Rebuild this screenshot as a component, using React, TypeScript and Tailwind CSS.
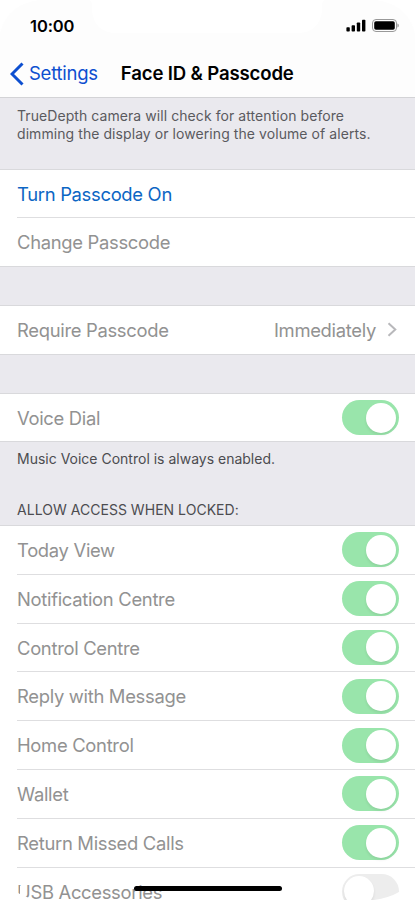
import type { ReactNode } from "react";

const ACCESS_ITEMS = [
  { label: "Today View", on: true },
  { label: "Notification Centre", on: true },
  { label: "Control Centre", on: true },
  { label: "Reply with Message", on: true },
  { label: "Home Control", on: true },
  { label: "Wallet", on: true },
  { label: "Return Missed Calls", on: true },
  { label: "USB Accessories", on: false },
];

function Toggle({ on }: { on: boolean }) {
  return (
    <span
      className={`flex h-[35px] w-[57px] shrink-0 items-center rounded-full ${
        on ? "justify-end bg-[#99e5ab] pr-[3px]" : "justify-start bg-[#ededed] pl-[2px]"
      }`}
    >
      <span className="size-[30px] rounded-full bg-white shadow-[0_2px_3px_rgba(0,0,0,0.08)]" />
    </span>
  );
}

function Group({ children }: { children: ReactNode }) {
  return <section className="border-y border-[#d9d9dc] bg-white pl-[17px]">{children}</section>;
}

type RowProps = {
  label: string;
  height?: string;
  divider?: boolean;
  active?: boolean;
  children?: ReactNode;
};

function Row({ label, height = "h-[48px]", divider, active, children }: RowProps) {
  return (
    <div
      className={`flex items-center justify-between pr-4 text-[18.4px] tracking-[-0.3px] ${height} ${
        divider ? "border-b border-[#dedee0]" : ""
      } ${active ? "text-[#0c66c4]" : "text-[#929292]"}`}
    >
      <span className="pt-[2px]">{label}</span>
      {children}
    </div>
  );
}

function StatusBar() {
  return (
    <div className="flex h-[50px] items-center justify-between pr-[16px] pl-[30px]">
      <span className="pt-[2px] text-[16.5px] font-semibold tracking-[-0.1px]">10:00</span>
      <div className="flex items-center gap-[6px]">
        <svg width="20" height="13" viewBox="0 0 20 13">
          <rect x="0.4" y="8.2" width="3.4" height="4.3" rx="0.8" />
          <rect x="5.6" y="6.2" width="3.4" height="6.3" rx="0.8" />
          <rect x="10.8" y="3.5" width="3.4" height="9" rx="0.8" />
          <rect x="16" y="0.7" width="3.4" height="11.8" rx="0.8" />
        </svg>
        <svg width="27" height="13" viewBox="0 0 27 13">
          <rect x="0.5" y="0.5" width="24" height="12" rx="3.5" fill="none" stroke="#999" />
          <rect x="2.2" y="2.2" width="20.6" height="8.6" rx="1.8" />
          <path d="M25.5 4.5c1.6.6 1.6 3.4 0 4z" fill="#888" />
        </svg>
      </div>
    </div>
  );
}

export default function App() {
  return (
    <div className="relative h-[900px] w-[415px] overflow-hidden bg-[#eae9ee] font-[Inter,'Liberation_Sans',sans-serif] text-black">
      <header className="h-[98px] border-b border-[#d3d3d6] bg-[#fdfdfd]">
        <StatusBar />
        <div className="flex h-[47px] items-center pl-[10px]">
          <svg width="14" height="24" viewBox="0 0 14 24" fill="none" stroke="#0d4fd0" strokeWidth="3">
            <path d="M12.5 1.5 2 12l10.5 10.5" />
          </svg>
          <span className="ml-[5px] text-[18.5px] tracking-[-0.25px] text-[#0d4fd0]">Settings</span>
          <h1 className="ml-[23px] text-[18.6px] font-semibold tracking-[-0.16px]">Face ID &amp; Passcode</h1>
        </div>
      </header>

      <p className="h-[71px] pt-[9px] pl-[17px] text-[14px] leading-[18px] tracking-[0.07px] text-[#5a5a5e]">
        TrueDepth camera will check for attention before
        <br />
        dimming the display or lowering the volume of alerts.
      </p>

      <Group>
        <Row label="Turn Passcode On" divider active />
        <Row label="Change Passcode" />
      </Group>

      <div className="h-[38px]" />
      <Group>
        <Row label="Require Passcode">
          <span className="flex items-center gap-[11px] pr-px">
            <span className="pt-[2px]">Immediately</span>
            <svg width="11" height="15" viewBox="0 0 11 15" fill="none" stroke="#b8b8bb" strokeWidth="2">
              <path d="m1.5 1.2 6.8 6.3-6.8 6.3" />
            </svg>
          </span>
        </Row>
      </Group>

      <div className="h-[38px]" />
      <Group>
        <Row label="Voice Dial" height="h-[47px]">
          <Toggle on />
        </Row>
      </Group>

      <p className="h-[50px] pt-[8px] pl-[17px] text-[14px] leading-[18px] text-[#4c4c50]">
        Music Voice Control is always enabled.
      </p>
      <h2 className="h-[33px] pt-[9px] pl-[17px] text-[14px] leading-[18px] tracking-[0.03px] text-[#4c4c50]">
        ALLOW ACCESS WHEN LOCKED:
      </h2>

      <Group>
        {ACCESS_ITEMS.map((item) => (
          <Row key={item.label} label={item.label} height="h-[48.8px]" divider>
            <Toggle on={item.on} />
          </Row>
        ))}
      </Group>

      {/* notch and rounded corners of the display */}
      <svg className="absolute top-0 left-0" width="415" height="34" viewBox="0 0 415 34" fill="#fff">
        <path d="M0 0h42C20 1 4 14 0 34z" />
        <path d="M415 0h-42c22 1 38 14 42 34z" />
        <path d="M89 0c3 1 3 3 3 8 0 15 9 25 24 25h182c15 0 24-10 24-25 0-5 0-7 3-8z" />
      </svg>
      <svg className="absolute bottom-0 left-0" width="415" height="30" viewBox="0 0 415 30" fill="#fff">
        <path d="M0 0c3 10 9 18 17 22.5l3 1.5v-8h5v10.5c4 1.5 9 2.6 16 3.5H0z" />
        <path d="M415 0c-3 10-9 18-17 22.5-6 3.5-14 6-24 7.5h41z" />
      </svg>
      <div className="absolute bottom-[9px] left-[134px] h-[5px] w-[148px] rounded-full bg-black" />
    </div>
  );
}
